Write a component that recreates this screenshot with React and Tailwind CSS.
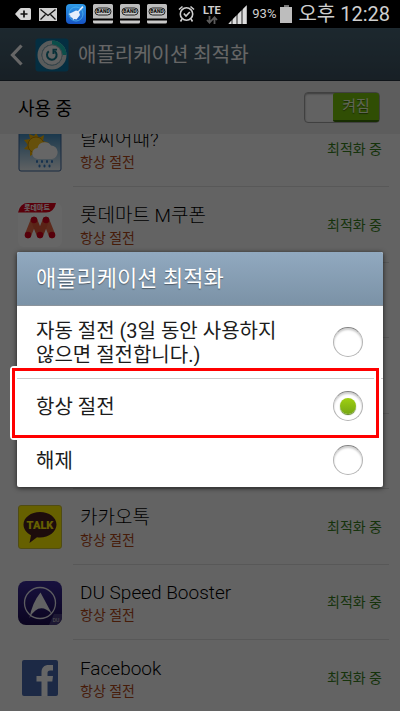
import { useState } from "react";

const FONT = "font-[Roboto,'Noto_Sans_CJK_KR',sans-serif]";

function BandIcon() {
  return (
    <svg width="20" height="20" viewBox="0 0 20 20" aria-label="BAND">
      <path d="M1.500 0h17a1.500 1.500 0 0 1 1.500 1.500V14.500H0V1.500A1.500 1.500 0 0 1 1.500 0Z" fill="#bdbdbd" />
      <path d="M0 16.500h20v1.500a1.500 1.500 0 0 1-1.500 1.500h-17A1.500 1.500 0 0 1 0 18Z" fill="#c9c9c9" />
      <rect x="2" y="4" width="16" height="7" rx="3.500" fill="#c4c4c4" stroke="#222" />
      <text x="10" y="9.400" textAnchor="middle" fontSize="5" fontWeight="900" fontFamily="Roboto, sans-serif" fill="#111">BAND</text>
    </svg>
  );
}

function StatusBar() {
  return (
    <header className="flex h-7 shrink-0 items-center justify-between bg-black pl-[14px] pr-[10px] text-[#cfcfcf]">
      <div className="flex items-center gap-[7px]">
        <svg width="18" height="12" viewBox="0 0 18 12" aria-hidden="true">
          <path d="M1 6 5.500 1Q6.200 0 7.500 0H15.500Q17 0 17 1.500V10.500Q17 12 15.500 12H7.500Q6.200 12 5.500 11Z" fill="#d6d6d6" />
          <path d="M10 2.500V9.500M6.500 6H13.500" stroke="#111" strokeWidth="1.700" />
        </svg>
        <svg width="18" height="13" viewBox="0 0 18 13" aria-hidden="true">
          <rect width="18" height="13" fill="#cfcfcf" />
          <path d="M1.500 1.500 9 7.500l7.500-6M1.500 11.500 6.500 6.500M16.500 11.500 11.500 6.500" fill="none" stroke="#111" strokeWidth="1.300" />
        </svg>
        <svg width="20" height="20" viewBox="0 0 20 20" aria-hidden="true" className="ml-0.5">
          <defs>
            <linearGradient id="broom" x1="0" y1="0" x2="0" y2="1">
              <stop offset="0" stopColor="#2f9be8" />
              <stop offset="1" stopColor="#1553c4" />
            </linearGradient>
          </defs>
          <rect width="20" height="20" rx="4" fill="url(#broom)" />
          <circle cx="10" cy="10" r="7" fill="none" stroke="#4db4ee" strokeWidth="0.800" />
          <path d="M16.300 2 17.500 3.200 13 8l1 3-3.500 4.500-2-.5-1.500 1-.5-2-2-1-.5-2-1.500-1L6 8.500l4-2 2 .5Z" fill="#e6eefc" />
        </svg>
        <BandIcon />
        <BandIcon />
        <BandIcon />
      </div>
      <div className="flex items-center">
        <svg width="17" height="18" viewBox="0 0 17 18" aria-hidden="true" className="mr-[7px]" fill="none" stroke="#cfcfcf" strokeWidth="1.600">
          <circle cx="8.500" cy="9" r="6.200" />
          <path d="M1 4.500 4.500 1.500M16 4.500 12.500 1.500M4 14 2.500 16.500M13 14l1.500 2.500M5.800 8.500 8 11l3.800-4" />
        </svg>
        <div className="mr-[7px] flex w-[19px] flex-col items-center">
          <span className="text-[11px] font-bold leading-[11px]">LTE</span>
          <svg width="12" height="8" viewBox="0 0 12 8" aria-hidden="true" fill="none" stroke="#5c5c5c" strokeWidth="1.800">
            <path d="M3.500 0V6.500M1 4l2.500 2.700L6 4M8.500 8V1.500M6 4l2.500-2.700L11 4" />
          </svg>
        </div>
        <svg width="19" height="19" viewBox="0 0 19 19" aria-hidden="true" className="mr-[5px]">
          <path d="M0 19 19 0V19Z" fill="#808080" />
          <path d="M1 18.500 3 16V19H1ZM5 14l3-3V19H5ZM10 9l3-3V19h-3ZM15 4l3.500-3.500V19H15Z" fill="#dedede" />
        </svg>
        <span className="mr-1 text-[13px] leading-5">93%</span>
        <svg width="12" height="18" viewBox="0 0 12 18" aria-hidden="true" className="mr-[6px]">
          <rect x="4" width="5" height="3" fill="#777" />
          <rect y="2" width="12" height="16" fill="#bdbdbd" />
        </svg>
        <time className="whitespace-nowrap text-xl leading-7">오후 12:28</time>
      </div>
    </header>
  );
}

function AppBar() {
  return (
    <div className="flex h-[53px] shrink-0 items-center border-y border-t-[#4c6878] border-b-[#26343f] bg-linear-to-b from-[#486474] to-[#3c505e] pl-2.5">
      <button type="button" aria-label="뒤로" className="mr-3">
        <svg width="13" height="22" viewBox="0 0 13 22" fill="none">
          <path d="M11.500 1.500 2.500 11l9 9.500" stroke="#fff" strokeWidth="3.200" />
        </svg>
      </button>
      <svg width="34" height="34" viewBox="0 0 34 34" aria-hidden="true">
        <rect x="0.500" y="0.500" width="33" height="33" rx="3" fill="#0b74a4" />
        <circle cx="17" cy="17" r="12.500" fill="none" stroke="#dfe3e3" strokeWidth="4" />
        <path d="M17 4.500A12.500 12.500 0 0 1 29.500 17" fill="none" stroke="#19c3b8" strokeWidth="4" />
        <circle cx="17" cy="17" r="10" fill="#f4f4f4" stroke="#b4bcbc" strokeWidth="0.800" />
        <path d="M13.800 13.200A4.800 4.800 0 1 0 19.500 13" fill="none" stroke="#14788c" strokeWidth="2" />
        <path d="M17.500 10.800h4.500v1.800h-2.500v3.400h-2Z" fill="#14788c" />
      </svg>
      <h1 className="ml-[9px] text-xl text-white">애플리케이션 최적화</h1>
    </div>
  );
}

function WeatherIcon() {
  return (
    <svg width="44" height="44" viewBox="0 0 44 44" aria-hidden="true">
      <defs>
        <linearGradient id="sky" x1="0" y1="0" x2="0" y2="1">
          <stop offset="0" stopColor="#2c7fb8" />
          <stop offset="1" stopColor="#f0f6f8" />
        </linearGradient>
      </defs>
      <rect x="1" y="1" width="42" height="42" rx="2" fill="url(#sky)" stroke="#3c649c" />
      <path d="m18 5 3 5 5-3-1 6 6 2-5 4 3 5-6-1-2 6-4-4-5 3v-6l-6-1 4-4-4-5 6-1-1-5 5 2Z" fill="#f4b400" />
      <circle cx="18" cy="17" r="8" fill="#ffc91c" stroke="#c88b00" />
      <path d="M20 31a5.500 5.500 0 0 1-.5-11 7.500 7.500 0 0 1 13.500-2.500A6.800 6.800 0 0 1 34 31Z" fill="#fff" />
      <path d="M19 33v1M24 33v1M29 33v1M34 33v1M21.500 37.500v1M26.500 37.500v1M31.500 37.500v1" stroke="#377cc4" strokeWidth="2" strokeLinecap="round" />
    </svg>
  );
}

function LotteIcon() {
  return (
    <svg width="44" height="44" viewBox="0 0 44 44" aria-hidden="true">
      <rect width="44" height="44" rx="6" fill="#fff" />
      <path d="M0 9.500Q2 0 10 0H38Q36 9.500 28 9.500Z" fill="#e00019" />
      <text x="19" y="7.200" textAnchor="middle" fontSize="7" fontWeight="700" fontFamily="'Noto Sans CJK KR', sans-serif" fill="#fff">롯데마트</text>
      <path d="M10 32 16 17M28 17 34 32" stroke="#e86a48" strokeWidth="6.500" strokeLinecap="round" />
      <path d="M16 17 22 32 28 17" fill="none" stroke="#e05838" strokeWidth="6.500" strokeLinecap="round" strokeLinejoin="round" />
      <g fill="#d8001c">
        <circle cx="10" cy="32" r="3.200" />
        <circle cx="16" cy="17" r="3.200" />
        <circle cx="22" cy="32" r="3.200" />
        <circle cx="28" cy="17" r="3.200" />
        <circle cx="34" cy="32" r="3.200" />
      </g>
    </svg>
  );
}

function TalkIcon() {
  return (
    <svg width="44" height="44" viewBox="0 0 44 44" aria-hidden="true">
      <rect x="0.500" y="0.500" width="43" height="43" rx="2.500" fill="#fff000" stroke="#c8be30" />
      <path d="M22 7C13 7 5.500 12.500 5.500 19.500c0 4.500 3 8.500 7.500 10.700L11.500 38l7.500-5.800q1.500.2 3 .2c9 0 16.500-5.700 16.500-12.900S31 7 22 7Z" fill="#4a2020" />
      <text x="22" y="24" textAnchor="middle" fontSize="11" fontWeight="900" fontFamily="Roboto, sans-serif" fill="#fff000">TALK</text>
    </svg>
  );
}

function SpeedIcon() {
  return (
    <svg width="44" height="44" viewBox="0 0 44 44" aria-hidden="true">
      <defs>
        <linearGradient id="night" x1="0" y1="0" x2="0" y2="1">
          <stop offset="0" stopColor="#3c2c9c" />
          <stop offset="1" stopColor="#1c0c50" />
        </linearGradient>
      </defs>
      <rect width="44" height="44" rx="8" fill="url(#night)" />
      <path d="M31 44 36 33h8v3a8 8 0 0 1-8 8Z" fill="#4a3e80" />
      <circle cx="22" cy="22" r="15.500" fill="none" stroke="#e8e8f0" strokeWidth="1.300" />
      <path d="M22.500 11.500 34 33Q21 20 11.500 37 14 22 22.500 11.500Z" fill="#f4f4f8" />
      <text x="38" y="41" textAnchor="middle" fontSize="5" fontFamily="Roboto, sans-serif" fill="#ddd">DU</text>
    </svg>
  );
}

function FacebookIcon() {
  return (
    <svg width="44" height="44" viewBox="0 0 44 44" aria-hidden="true">
      <rect x="4" y="4" width="36" height="36" rx="2" fill="#4868ac" />
      <path d="M23.500 40V25.500H18.500V20h5v-3.500C23.500 11.500 26 9 31 9h4v5.500h-2.800c-2 0-2.700.8-2.700 2.700V20H35l-.7 5.500h-4.800V40Z" fill="#fff" />
    </svg>
  );
}

const APPS = [
  { name: "날씨어때?", Icon: WeatherIcon },
  { name: "롯데마트 M쿠폰", Icon: LotteIcon },
  null,
  null,
  null,
  { name: "카카오톡", Icon: TalkIcon },
  { name: "DU Speed Booster", Icon: SpeedIcon },
  { name: "Facebook", Icon: FacebookIcon },
];

function AppRow({ app }) {
  return (
    <li className="flex h-[75px] shrink-0 pl-[18px] pr-[11px] even:h-[76px]">
      <div className="flex w-[55px] shrink-0 items-center">{app && <app.Icon />}</div>
      <div className="flex min-w-0 flex-1 items-center justify-between border-b border-[#dcdcdc] pl-[7px] pr-[7px]">
        {app && (
          <>
            <div className="pt-0.5">
              <p className="text-[19px] font-light leading-6 text-black">{app.name}</p>
              <p className="text-sm leading-5 text-[#b04818]">항상 절전</p>
            </div>
            <p className="text-sm text-[#38801c]">최적화 중</p>
          </>
        )}
      </div>
    </li>
  );
}

const OPTIONS = ["자동 절전 (3일 동안 사용하지 않으면 절전합니다.)", "항상 절전", "해제"];

function OptimizeDialog() {
  const [selected, setSelected] = useState(1);
  return (
    <div role="dialog" aria-labelledby="dialog-title" className="absolute inset-x-[17px] top-[252px] rounded-xs bg-white shadow-[0_1px_5px_rgba(0,0,0,0.7)]">
      <h2 id="dialog-title" className="flex h-[54px] items-center rounded-t-xs border-b border-[#8c949c] bg-linear-to-b from-[#91a9c0] to-[#7b92a6] px-[19px] text-[22px] text-white [text-shadow:0_1px_1px_rgba(0,0,0,0.4)]">
        애플리케이션 최적화
      </h2>
      <div>
        {OPTIONS.map((text, i) => (
          <div key={text} className={`relative ${i === 1 ? "border-t border-[#cccccc]" : ""}`}>
            <label className={`flex items-center justify-between pl-[19px] pr-5 ${i === 0 ? "h-[72px]" : "h-[54px]"}`}>
              <span className="w-[250px] break-keep pt-0.5 text-xl leading-6 text-[#1c1c1c]">{text}</span>
              <input
                type="radio"
                name="mode"
                checked={selected === i}
                onChange={() => setSelected(i)}
                className="grid size-[30px] shrink-0 appearance-none place-items-center rounded-full border border-[#b4b4b4] border-t-[#848484] bg-white shadow-[inset_0_2px_2px_rgba(0,0,0,0.2)] checked:before:size-4 checked:before:rounded-full checked:before:bg-linear-to-b checked:before:from-[#a0d010] checked:before:to-[#76a812] checked:before:shadow-[0_1px_1px_#507810] checked:before:content-['']"
              />
            </label>
            {i === 1 && (
              <div className="pointer-events-none absolute -bottom-[7px] -left-[7px] -top-[13px] right-[2px] z-10 rounded-sm border-2 border-white">
                <div className="h-full border-[3px] border-[#ff0000] shadow-[inset_0_0_0_2px_white]" />
              </div>
            )}
          </div>
        ))}
      </div>
    </div>
  );
}

export default function App() {
  return (
    <main className={`relative flex h-screen flex-col overflow-hidden bg-[#f8f8f8] ${FONT}`}>
      <StatusBar />
      <AppBar />
      <div className="flex h-[53px] shrink-0 items-center justify-between bg-[#e8e8e8] pl-[18px] pr-5">
        <span id="in-use" className="pt-0.5 text-lg text-black">사용 중</span>
        <label className="flex h-[31px] w-[76px] cursor-pointer justify-end rounded-sm border border-[#a0a0a0] bg-[#f4f4f4] shadow-[inset_0_1px_2px_rgba(0,0,0,0.4)]">
          <input type="checkbox" role="switch" aria-labelledby="in-use" defaultChecked className="sr-only" />
          <span className="flex h-[29px] w-[46px] items-center justify-center rounded-xs border-b-2 border-[#3c7008] bg-[#78c40c] text-[15px] text-[#f0ffd8] [text-shadow:0_1px_1px_rgba(0,0,0,0.5)]">
            켜짐
          </span>
        </label>
      </div>
      <div className="min-h-0 flex-1 overflow-hidden">
        <ul className="-mt-[22px] flex flex-col">
          {APPS.map((app, i) => (
            <AppRow key={i} app={app} />
          ))}
        </ul>
      </div>
      <div className="absolute inset-x-0 bottom-0 top-7 bg-black/60" />
      <OptimizeDialog />
    </main>
  );
}
